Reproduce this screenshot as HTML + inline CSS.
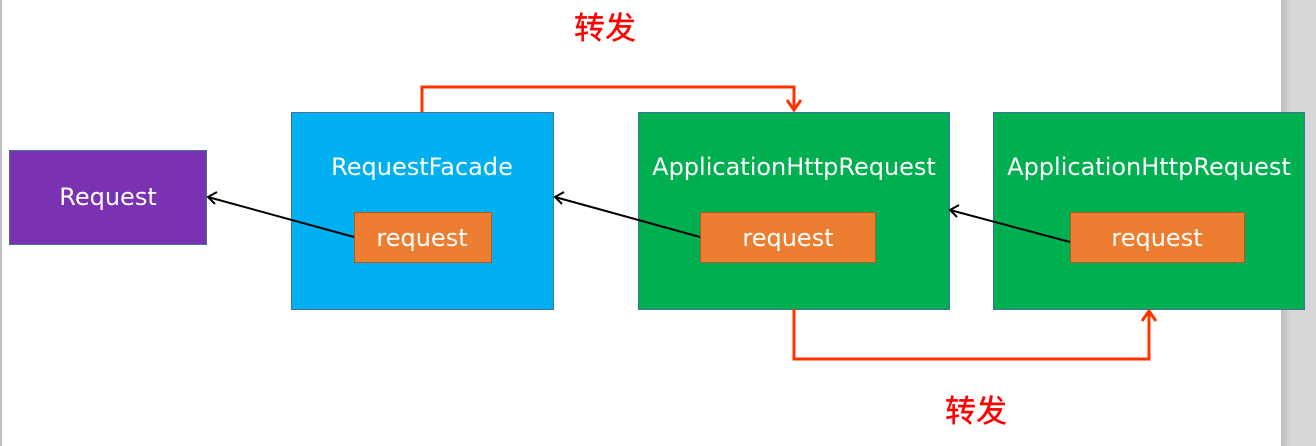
<!DOCTYPE html>
<html><head><meta charset="utf-8"><style>
html,body{margin:0;padding:0;background:#fff;width:1316px;height:446px;overflow:hidden}
svg text{font-family:"DejaVu Sans","Liberation Sans","Noto Sans CJK SC",sans-serif}
</style></head><body>
<svg width="1316" height="446" xmlns="http://www.w3.org/2000/svg">
<defs><linearGradient id="g" x1="0" x2="1"><stop offset="0" stop-color="#bdbdbd"/><stop offset="0.3" stop-color="#d6d6d6"/><stop offset="1" stop-color="#d8d8d8"/></linearGradient></defs>
<rect x="0" y="0" width="2" height="446" fill="#c0c0c0"/>
<rect x="1281" y="0" width="35" height="446" fill="url(#g)"/>
<rect x="9.5" y="150.5" width="197" height="94" fill="#7A32B2" stroke="#41719C"/>
<text x="108" y="205" fill="#fff" font-size="24" text-anchor="middle">Request</text>
<rect x="291.5" y="112.5" width="262" height="197" fill="#00B0F0" stroke="#41719C"/>
<text x="422" y="175" fill="#fff" font-size="24" text-anchor="middle">RequestFacade</text>
<rect x="354.5" y="212.5" width="137" height="50" fill="#ED7D31" stroke="#AE5A21"/>
<text x="422" y="246" fill="#fff" font-size="24" text-anchor="middle">request</text>
<rect x="638.5" y="112.5" width="311" height="197" fill="#00B050" stroke="#41719C"/>
<text x="794" y="175" fill="#fff" font-size="24" text-anchor="middle">ApplicationHttpRequest</text>
<rect x="700.5" y="212.5" width="175" height="50" fill="#ED7D31" stroke="#AE5A21"/>
<text x="788" y="246" fill="#fff" font-size="24" text-anchor="middle">request</text>
<rect x="993.5" y="112.5" width="311" height="197" fill="#00B050" stroke="#41719C"/>
<text x="1149" y="175" fill="#fff" font-size="24" text-anchor="middle">ApplicationHttpRequest</text>
<rect x="1070.5" y="212.5" width="174" height="50" fill="#ED7D31" stroke="#AE5A21"/>
<text x="1157" y="246" fill="#fff" font-size="24" text-anchor="middle">request</text>
<g stroke="#000" stroke-width="2" fill="none">
<path d="M354 237 L208 197 M217 192 L208 197 L215 204"/>
<path d="M700 237 L555 197 M564 192 L555 197 L562 204"/>
<path d="M1070 242 L950 210 M959 205 L950 210 L957 217"/>
</g>
<g stroke="#FF3300" stroke-width="3" fill="none">
<path d="M422 112 V87 H794 V110 M787 100 L794 110 L801 100"/>
<path d="M794 309 V359 H1149 V311 M1142 321 L1149 311 L1156 321"/>
</g>
<text x="605" y="39" fill="#FF0000" font-size="31" text-anchor="middle" stroke="#FF0000" stroke-width="0.4">转发</text>
<text x="976" y="422" fill="#FF0000" font-size="31" text-anchor="middle" stroke="#FF0000" stroke-width="0.4">转发</text>
</svg>
</body></html>
